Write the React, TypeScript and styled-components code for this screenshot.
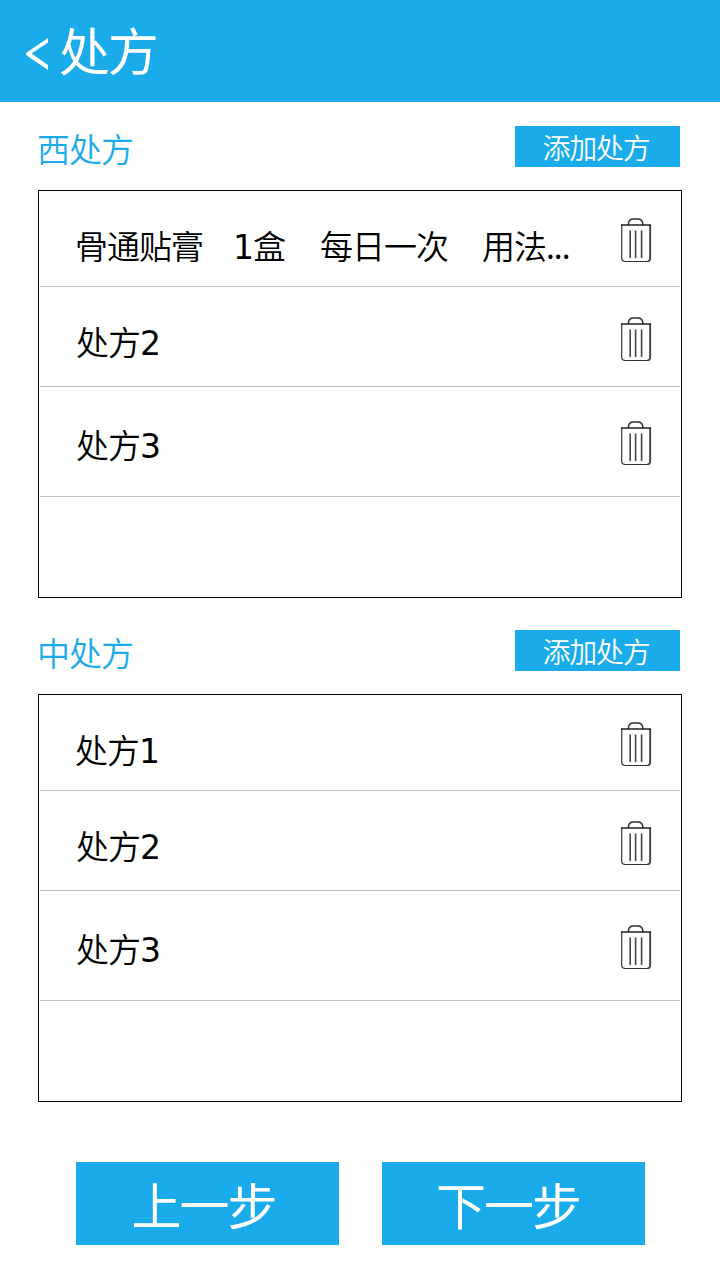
import React from 'react';
import styled, { createGlobalStyle } from 'styled-components';

const BLUE = '#1aacea';

const GlobalStyle = createGlobalStyle`
  * { box-sizing: border-box; }
  body {
    margin: 0;
    background: #fff;
    font-family: 'Noto Sans', 'Noto Sans CJK SC', sans-serif;
    font-weight: 350;
  }
  button { border: 0; padding: 0; font: inherit; cursor: pointer; }
`;

const Page = styled.main`
  width: 720px;
  height: 1280px;
  overflow: hidden;
  background: #fff;
`;

const Header = styled.header`
  height: 102px;
  padding-left: 26px;
  display: flex;
  align-items: flex-start;
  background: ${BLUE};
`;

const BackButton = styled.button`
  width: 33px;
  height: 32px;
  margin-top: 38px;
  background: none;
  text-align: left;
  line-height: 0;
`;

const Title = styled.h1`
  margin: 21px 0 0;
  font-size: 51px;
  font-weight: 400;
  line-height: 60px;
  letter-spacing: -2.3px;
  color: #fff;
`;

const Section = styled.section`
  padding: 24px 38px 0;
  height: 504px;
`;

const SectionHeader = styled.div`
  height: 64px;
  display: flex;
  align-items: flex-start;
  justify-content: space-between;
  padding-right: 2px;
`;

const SectionTitle = styled.h2`
  margin: 4px 0 0 -1px;
  font-size: 33px;
  font-weight: 350;
  line-height: 40px;
  letter-spacing: -1px;
  color: ${BLUE};
`;

const AddButton = styled.button`
  && {
    width: 165px;
    height: 41px;
    padding: 4px 3px 0 0;
    font-size: 28px;
    line-height: 37px;
    letter-spacing: -1.3px;
  }
  background: ${BLUE};
  color: #fff;
`;

const List = styled.ul`
  width: 644px;
  height: 408px;
  margin: 0;
  padding: 0 1px;
  border: 1px solid #000;
  list-style: none;
`;

const Row = styled.li<{ $height: number; $textTop: number; $indent: number }>`
  height: ${p => p.$height}px;
  padding: ${p => p.$textTop}px 28px 0 ${p => p.$indent}px;
  display: flex;
  align-items: flex-start;
  justify-content: space-between;
  border-bottom: 1px solid #bfbfbf;
`;

const RowText = styled.div`
  display: grid;
  grid-template-columns: 158px 87px 162px auto;
  font-size: 33px;
  line-height: 40px;
  letter-spacing: -1px;
  color: #000;
  white-space: nowrap;
`;

const Digit = styled.span`
  font-family: 'DejaVu Sans', sans-serif;
  font-weight: 400;
  line-height: 1;
`;

const Dots = styled.span`
  font-weight: 400;
`;

const DeleteButton = styled.button<{ $lift: number }>`
  width: 31px;
  height: 45px;
  margin-top: -${p => p.$lift}px;
  background: none;
  line-height: 0;
`;

const Footer = styled.footer`
  padding: 52px 75px 0 76px;
  display: flex;
  justify-content: space-between;
`;

const StepButton = styled.button<{ $shift: number }>`
  && {
    width: 263px;
    height: 83px;
    padding: 4px ${p => p.$shift}px 0 0;
    font-size: 50px;
    font-weight: 400;
    line-height: 78px;
    letter-spacing: -2px;
  }
  background: ${BLUE};
  color: #fff;
`;

const BackIcon = () => (
  <svg width="22" height="32" viewBox="0 0 22 32">
    <path d="M22 0V4.5L5.5 15.5L22 27V32L0 17V15Z" fill="#fff" />
  </svg>
);

const TrashIcon = () => (
  <svg width="31" height="45" viewBox="0 0 31 45" fill="none">
    <path d="M7.5 7V5.2Q8.2 1 12 1H17Q21 1 21.8 5.2V7" stroke="#303030" strokeWidth="1.5" />
    <path d="M.7 7V40.5Q.9 43.4 4 43.5H26Q29.1 43.4 29.3 40.5V7" stroke="#333" strokeWidth="1.2" />
    <path d="M29.2 7V40.5Q29 43 27 43.5" stroke="#444" strokeWidth="1.8" />
    <path d="M0 7H30" stroke="#111" strokeWidth="1.4" />
    <path d="M9.2 12.5V40M14.6 12.5V40M20.6 12.5V40" stroke="#444" strokeWidth="1.6" />
  </svg>
);

const renderCell = (text: string) =>
  text.split(/(\d+|\.+)/).filter(Boolean).map((part, i) => {
    if (/^\d/.test(part)) return <Digit key={i}>{part}</Digit>;
    if (part.startsWith('.')) return <Dots key={i}>{part}</Dots>;
    return part;
  });

const rowMetrics = [
  { height: 96, textTop: 36, indent: 35, lift: 9 },
  { height: 100, textTop: 36, indent: 36, lift: 6 },
  { height: 110, textTop: 39, indent: 36, lift: 5 },
];

const groups = [
  { title: '西处方', rows: [['骨通贴膏', '1盒', '每日一次', '用法...'], ['处方2'], ['处方3']] },
  { title: '中处方', rows: [['处方1'], ['处方2'], ['处方3']] },
];

export default function App() {
  return (
    <>
      <GlobalStyle />
      <Page>
        <Header>
          <BackButton aria-label="返回"><BackIcon /></BackButton>
          <Title>处方</Title>
        </Header>
        {groups.map(group => (
          <Section key={group.title}>
            <SectionHeader>
              <SectionTitle>{group.title}</SectionTitle>
              <AddButton>添加处方</AddButton>
            </SectionHeader>
            <List>
              {group.rows.map((cells, i) => {
                const m = rowMetrics[i];
                return (
                  <Row key={i} $height={m.height} $textTop={m.textTop} $indent={m.indent}>
                    <RowText>
                      {cells.map(cell => <span key={cell}>{renderCell(cell)}</span>)}
                    </RowText>
                    <DeleteButton $lift={m.lift} aria-label="删除"><TrashIcon /></DeleteButton>
                  </Row>
                );
              })}
            </List>
          </Section>
        ))}
        <Footer>
          <StepButton $shift={8}>上一步</StepButton>
          <StepButton $shift={11}>下一步</StepButton>
        </Footer>
      </Page>
    </>
  );
}
